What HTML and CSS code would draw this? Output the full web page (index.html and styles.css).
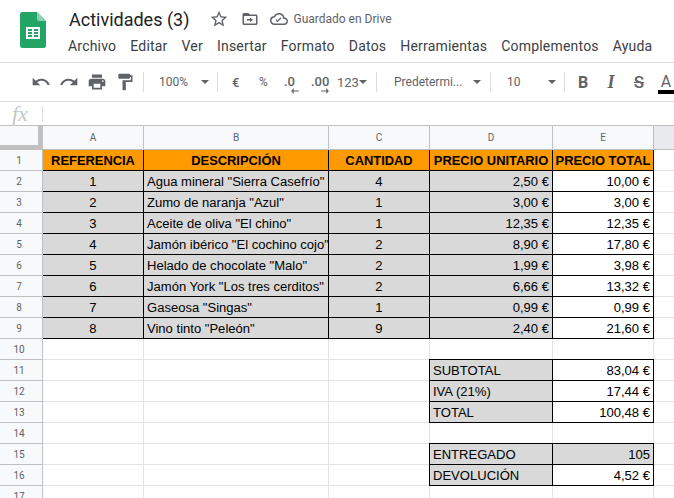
FILE: index.html
```html
<!DOCTYPE html>
<html lang="es">
<head>
    <meta charset="UTF-8">
    <title>Actividades (3)</title>
    <link rel="stylesheet" href="styles.css">
</head>
<body>
    <header class="doc-header">
        <svg class="logo" width="26" height="36" viewBox="0 0 26 36">
            <path d="M2.5 0H17l9 9v24.500a2.500 2.500 0 0 1-2.500 2.500h-21A2.500 2.500 0 0 1 0 33.500v-31A2.500 2.500 0 0 1 2.500 0z" fill="#23a566"/>
            <path d="M17 0l9 9h-6.500A2.500 2.500 0 0 1 17 6.500z" fill="#8ed1b1"/>
            <path d="M6 15h14v12H6z" fill="#fff"/>
            <path d="M8 17h4v2H8zM14 17h4v2h-4zM8 20h4v2H8zM14 20h4v2h-4zM8 23h4v2H8zM14 23h4v2h-4z" fill="#23a566"/>
        </svg>
        <div class="doc-info">
            <div class="title-row">
                <span class="doc-title">Actividades (3)</span>
                <svg class="title-icon star" width="20" height="20" viewBox="0 0 24 24"><path d="M22 9.240l-7.190-.62L12 2 9.190 8.630 2 9.240l5.460 4.730L5.820 21 12 17.270 18.180 21l-1.630-7.030L22 9.240zM12 15.400l-3.760 2.270 1-4.280-3.320-2.880 4.380-.38L12 6.100l1.710 4.040 4.380.38-3.320 2.880 1 4.280L12 15.400z"/></svg>
                <svg class="title-icon move" width="18" height="18" viewBox="0 0 24 24"><path d="M20 6h-8l-2-2H4c-1.100 0-2 .9-2 2v12c0 1.100.9 2 2 2h16c1.100 0 2-.9 2-2V8c0-1.100-.9-2-2-2zm0 12H4V8h16v10zM12 16l4-3-4-3v2H8v2h4z"/></svg>
                <svg class="title-icon cloud" width="18" height="18" viewBox="0 0 24 24"><path d="M19.350 10.040A7.490 7.490 0 0 0 12 4C9.110 4 6.600 5.640 5.350 8.040A5.994 5.994 0 0 0 0 14c0 3.310 2.690 6 6 6h13c2.760 0 5-2.240 5-5 0-2.640-2.050-4.780-4.650-4.960zM19 18H6c-2.210 0-4-1.790-4-4s1.790-4 4-4h.71C7.370 7.690 9.480 6 12 6c3.040 0 5.500 2.460 5.500 5.500v.5H19c1.660 0 3 1.340 3 3s-1.340 3-3 3zm-9-1.800l-2.800-2.800 1.100-1.100 1.700 1.700 4.200-4.200 1.100 1.100z"/></svg>
                <span class="save-status">Guardado en Drive</span>
            </div>
            <nav class="menu">
                <span>Archivo</span><span>Editar</span><span>Ver</span><span>Insertar</span><span>Formato</span><span>Datos</span><span>Herramientas</span><span>Complementos</span><span>Ayuda</span>
            </nav>
        </div>
    </header>

    <div class="toolbar">
        <svg class="tool" width="20" height="20" viewBox="0 0 24 24"><path d="M12.500 8c-2.650 0-5.050.99-6.900 2.600L2 7v9h9l-3.620-3.620c1.390-1.160 3.160-1.880 5.120-1.880 3.540 0 6.550 2.310 7.600 5.500l2.370-.78C21.080 11.030 17.150 8 12.500 8z"/></svg>
        <svg class="tool" width="20" height="20" viewBox="0 0 24 24"><path d="M18.400 10.600C16.550 8.990 14.150 8 11.500 8c-4.650 0-8.580 3.030-9.960 7.220L3.900 16c1.050-3.190 4.050-5.500 7.600-5.500 1.950 0 3.730.72 5.120 1.880L13 16h9V7l-3.600 3.600z"/></svg>
        <svg class="tool" width="20" height="20" viewBox="0 0 24 24"><path d="M19 8H5c-1.660 0-3 1.340-3 3v6h4v4h12v-4h4v-6c0-1.660-1.340-3-3-3zm-3 11H8v-5h8v5zm3-7c-.55 0-1-.45-1-1s.45-1 1-1 1 .45 1 1-.45 1-1 1zm-1-9H6v4h12V3z"/></svg>
        <svg class="tool" width="20" height="20" viewBox="0 0 24 24"><path d="M18 4V3c0-.55-.45-1-1-1H5c-.55 0-1 .45-1 1v4c0 .55.45 1 1 1h12c.55 0 1-.45 1-1V6h1v4H9v11c0 .55.45 1 1 1h2c.55 0 1-.45 1-1v-9h8V4h-3z"/></svg>
        <i class="sep"></i>
        <span class="tool-text zoom-val">100%</span><i class="caret caret-zoom"></i>
        <i class="sep sep-b"></i>
        <span class="tool-text euro">€</span>
        <span class="tool-text percent">%</span>
        <span class="decimal dec-less">.0<svg width="8" height="6" viewBox="0 0 9 7"><path d="M9 3H3V0L0 3.500 3 7V4h6z"/></svg></span>
        <span class="decimal dec-more">.00<svg width="8" height="6" viewBox="0 0 9 7"><path d="M0 3h6V0l3 3.500L6 7V4H0z"/></svg></span>
        <span class="tool-text fmt">123</span><i class="caret caret-fmt"></i>
        <i class="sep sep-c"></i>
        <span class="tool-text font-name">Predetermi...</span><i class="caret caret-font"></i>
        <i class="sep sep-d"></i>
        <span class="tool-text font-size">10</span><i class="caret caret-size"></i>
        <i class="sep sep-e"></i>
        <b class="style-btn">B</b>
        <b class="style-btn italic">I</b>
        <s class="style-btn strike">S</s>
        <span class="text-color">A</span>
    </div>

    <div class="formula-bar">
        <span class="fx">fx</span>
        <i class="fx-sep"></i>
    </div>

    <table class="sheet">
        <colgroup>
            <col class="c-row"><col class="c-a"><col class="c-b"><col class="c-c"><col class="c-d"><col class="c-e"><col class="c-rest">
        </colgroup>
        <thead>
            <tr><th class="corner"></th><th>A</th><th>B</th><th>C</th><th>D</th><th>E</th><th class="blank-head"></th></tr>
        </thead>
        <tbody>
            <tr><th>1</th><td class="hd">REFERENCIA</td><td class="hd">DESCRIPCIÓN</td><td class="hd">CANTIDAD</td><td class="hd">PRECIO UNITARIO</td><td class="hd">PRECIO TOTAL</td><td></td></tr>
            <tr><th>2</th><td class="box g mid">1</td><td class="box g">Agua mineral "Sierra Casefrío"</td><td class="box g mid">4</td><td class="box g num">2,50 €</td><td class="box num">10,00 €</td><td></td></tr>
            <tr><th>3</th><td class="box g mid">2</td><td class="box g">Zumo de naranja "Azul"</td><td class="box g mid">1</td><td class="box g num">3,00 €</td><td class="box num">3,00 €</td><td></td></tr>
            <tr><th>4</th><td class="box g mid">3</td><td class="box g">Aceite de oliva "El chino"</td><td class="box g mid">1</td><td class="box g num">12,35 €</td><td class="box num">12,35 €</td><td></td></tr>
            <tr><th>5</th><td class="box g mid">4</td><td class="box g">Jamón ibérico "El cochino cojo"</td><td class="box g mid">2</td><td class="box g num">8,90 €</td><td class="box num">17,80 €</td><td></td></tr>
            <tr><th>6</th><td class="box g mid">5</td><td class="box g">Helado de chocolate "Malo"</td><td class="box g mid">2</td><td class="box g num">1,99 €</td><td class="box num">3,98 €</td><td></td></tr>
            <tr><th>7</th><td class="box g mid">6</td><td class="box g">Jamón York "Los tres cerditos"</td><td class="box g mid">2</td><td class="box g num">6,66 €</td><td class="box num">13,32 €</td><td></td></tr>
            <tr><th>8</th><td class="box g mid">7</td><td class="box g">Gaseosa "Singas"</td><td class="box g mid">1</td><td class="box g num">0,99 €</td><td class="box num">0,99 €</td><td></td></tr>
            <tr><th>9</th><td class="box g mid">8</td><td class="box g">Vino tinto "Peleón"</td><td class="box g mid">9</td><td class="box g num">2,40 €</td><td class="box num">21,60 €</td><td></td></tr>
            <tr><th>10</th><td></td><td></td><td></td><td></td><td></td><td></td></tr>
            <tr><th>11</th><td></td><td></td><td></td><td class="box g edge-tl">SUBTOTAL</td><td class="box num edge-t">83,04 €</td><td></td></tr>
            <tr><th>12</th><td></td><td></td><td></td><td class="box g edge-l">IVA (21%)</td><td class="box num">17,44 €</td><td></td></tr>
            <tr><th>13</th><td></td><td></td><td></td><td class="box g edge-l">TOTAL</td><td class="box num">100,48 €</td><td></td></tr>
            <tr><th>14</th><td></td><td></td><td></td><td></td><td></td><td></td></tr>
            <tr><th>15</th><td></td><td></td><td></td><td class="box g edge-tl">ENTREGADO</td><td class="box g num edge-t">105</td><td></td></tr>
            <tr><th>16</th><td></td><td></td><td></td><td class="box g edge-l">DEVOLUCIÓN</td><td class="box num">4,52 €</td><td></td></tr>
            <tr><th>17</th><td></td><td></td><td></td><td></td><td></td><td></td></tr>
        </tbody>
    </table>
</body>
</html>
```

FILE: styles.css
```css
html, body {
    height: 100%;
}

body {
    margin: 0;
    overflow: hidden;
    background: #fff;
    color: #000;
    font-family: Roboto, sans-serif;
}

/* Title and menu */
.doc-header {
    display: flex;
    height: 63px;
    box-sizing: border-box;
    border-bottom: 1px solid #dadce0;
}

.logo {
    margin: 12px 22px 0 20px;
}

.doc-info {
    flex: 1;
    white-space: nowrap;
}

.title-row {
    display: flex;
    align-items: center;
    height: 24px;
    margin-top: 7px;
    margin-left: 1px;
}

.doc-title {
    font-size: 18px;
    color: #202124;
    margin-right: 20px;
}

.title-icon {
    fill: #5f6368;
}

.move {
    margin-left: 12px;
}

.cloud {
    margin-left: 11px;
}

.save-status {
    font-size: 12px;
    color: #5f6368;
    margin-left: 5px;
}

.menu {
    display: flex;
    gap: 14px;
    margin-top: 7px;
    font-size: 14px;
    letter-spacing: 0.2px;
    color: #3c4043;
}

/* Toolbar */
.toolbar {
    display: flex;
    align-items: center;
    height: 39px;
    box-sizing: border-box;
    border-bottom: 1px solid #dadce0;
    padding-left: 31px;
    white-space: nowrap;
    overflow: hidden;
}

.tool {
    fill: #5f6368;
    margin-right: 8px;
    flex: none;
}

.sep {
    flex: none;
    width: 1px;
    height: 20px;
    background: #dadce0;
}

.tool-text {
    flex: none;
    font-size: 12px;
    color: #5f6368;
}

.caret {
    flex: none;
    width: 0;
    height: 0;
    border-left: 4px solid transparent;
    border-right: 4px solid transparent;
    border-top: 4px solid #5f6368;
}

.zoom-val { margin-left: 15px; width: 29px; }
.caret-zoom { margin-left: 13px; }
.sep-b { margin-left: 8px; }
.euro { margin-left: 14px; width: 8px; font-size: 13px; font-weight: 500; }
.percent { margin-left: 19px; width: 10px; }

.decimal {
    flex: none;
    display: flex;
    flex-direction: column;
    font-size: 13px;
    line-height: 13px;
    color: #5f6368;
    font-weight: 500;
    margin-top: 4px;
}

.decimal svg {
    fill: #5f6368;
    display: block;
    align-self: flex-end;
}

.dec-less { margin-left: 15px; width: 15px; }
.dec-more { margin-left: 12px; width: 18px; }
.fmt { margin-left: 8px; width: 20px; font-size: 13px; }
.caret-fmt { margin-left: 2px; }
.sep-c { margin-left: 9px; }
.font-name { margin-left: 17px; width: 68px; }
.caret-font { margin-left: 11px; }
.sep-d { margin-left: 9px; }
.font-size { margin-left: 16px; width: 12px; }
.caret-size { margin-left: 29px; }
.sep-e { margin-left: 8px; }

.style-btn {
    flex: none;
    width: 20px;
    margin-left: 8px;
    font-size: 16px;
    text-align: center;
    color: #5f6368;
}

.italic {
    font-family: "Liberation Serif", serif;
    font-size: 18px;
    font-style: italic;
}

.strike {
    font-size: 17px;
    font-weight: 500;
}

.text-color {
    flex: none;
    width: 16px;
    margin-left: 9px;
    margin-top: 2px;
    font-size: 16px;
    line-height: 17px;
    text-align: center;
    color: #5f6368;
    border-bottom: 4px solid #000;
}

/* Formula bar */
.formula-bar {
    display: flex;
    align-items: center;
    height: 24px;
    box-sizing: border-box;
    border-bottom: 1px solid #c0c0c0;
}

.fx {
    font-family: "Liberation Serif", serif;
    font-style: italic;
    font-size: 22px;
    color: #c4c7c5;
    width: 42px;
    padding-left: 12px;
    box-sizing: border-box;
}

.fx-sep {
    width: 1px;
    height: 16px;
    background: #dadce0;
}

/* Sheet */
.sheet {
    border-collapse: separate;
    border-spacing: 0;
    table-layout: fixed;
    width: 674px;
    font-family: "Liberation Sans", Arial, sans-serif;
    font-size: 13.05px;
}

.c-row { width: 43px; }
.c-a { width: 101px; }
.c-b { width: 185px; }
.c-c { width: 101px; }
.c-d { width: 123px; }
.c-e { width: 101px; }
.c-rest { width: 20px; }

.sheet thead th {
    height: 24px;
    padding: 0;
    box-sizing: border-box;
    background: #f8f9fa;
    border-right: 1px solid #c0c0c0;
    border-bottom: 1px solid #c0c0c0;
    font-size: 10px;
    font-weight: normal;
    font-family: Roboto, sans-serif;
    color: #5f6368;
}

.sheet thead .corner {
    box-shadow: inset -4px -4px 0 #c0c0c0;
}

.sheet thead .blank-head {
    background: #e8eaed;
    border-right: none;
}

.sheet tbody th {
    height: 21px;
    padding: 0 4px 0 0;
    box-sizing: border-box;
    background: #f8f9fa;
    border-right: 1px solid #c0c0c0;
    border-bottom: 1px solid #c0c0c0;
    font-size: 10px;
    font-weight: normal;
    font-family: Roboto, sans-serif;
    color: #5f6368;
}

.sheet td {
    height: 21px;
    padding: 0 3px;
    box-sizing: border-box;
    border-right: 1px solid #e2e3e3;
    border-bottom: 1px solid #e2e3e3;
    white-space: nowrap;
    line-height: 17px;
}

.sheet td:last-child {
    border-right: none;
}

.sheet td.box,
.sheet td.hd {
    border-right-color: #000;
    border-bottom-color: #000;
}

.sheet td.hd {
    background: #ff9900;
    font-size: 12.9px;
    font-weight: bold;
    text-align: center;
    padding: 0 2px;
}

/* black edges of the lower blocks, over the neighbouring grid lines */
.sheet td.edge-l {
    box-shadow: -1px 0 0 #000;
}

.sheet td.edge-t {
    box-shadow: 0 -1px 0 #000;
}

.sheet td.edge-tl {
    box-shadow: -1px 0 0 #000, 0 -1px 0 #000, -1px -1px 0 #000;
}

.g {
    background: #d9d9d9;
}

.mid {
    text-align: center;
}

.num {
    text-align: right;
}
```
